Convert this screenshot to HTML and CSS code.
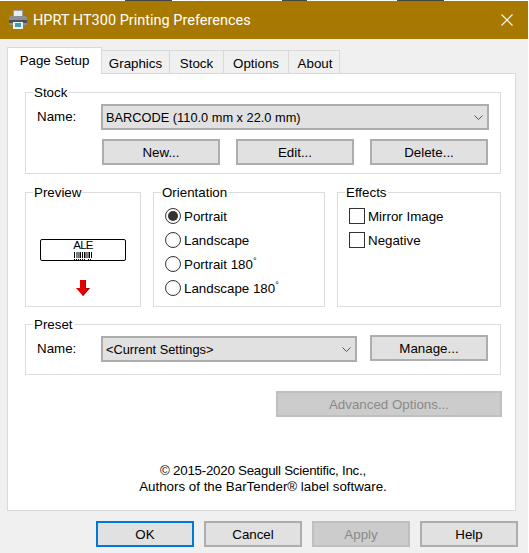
FILE: index.html
```html
<!DOCTYPE html>
<html lang="en">
<head>
    <meta charset="UTF-8">
    <title>HPRT HT300 Printing Preferences</title>
    <link rel="stylesheet" href="styles.css">
</head>
<body>
    <div class="window">
        <div class="titlebar">
            <svg class="title-icon" width="20" height="20" viewBox="0 0 20 20">
                <rect x="5.5" y="0.5" width="9" height="7" fill="#e8ecef" stroke="#9aa0a5"/>
                <path d="M1 8 Q1 6 3 6 H17 Q19 6 19 8 V15 H1 Z" fill="#8a9095"/>
                <rect x="1" y="10" width="18" height="3" fill="#4a5257"/>
                <rect x="5" y="12" width="10" height="7" fill="#eef1f3"/>
                <rect x="7" y="13" width="6" height="4" fill="#3c9fb5"/>
            </svg>
            <span class="title-text">HPRT HT300 Printing Preferences</span>
            <svg class="title-close" width="12" height="12" viewBox="0 0 12 12">
                <path d="M0.5 0.5 L11.5 11.5 M11.5 0.5 L0.5 11.5" stroke="#fff" stroke-width="1.1" fill="none"/>
            </svg>
        </div>

        <div class="content">
            <div class="tabs">
                <div class="tab tab-active">Page Setup</div>
                <div class="tab tab-graphics">Graphics</div>
                <div class="tab tab-stock">Stock</div>
                <div class="tab tab-options">Options</div>
                <div class="tab tab-about">About</div>
            </div>

            <div class="panel">
                <div class="group group-stock">
                    <div class="group-title">Stock</div>
                    <div class="field-row">
                        <span class="field-label">Name:</span>
                        <div class="select select-wide">
                            <span class="select-value">BARCODE (110.0 mm x 22.0 mm)</span>
                            <svg class="chevron" width="9" height="5" viewBox="0 0 9 5"><path d="M0.5 0.5 L4.5 4.5 L8.5 0.5" fill="none" stroke="#555" stroke-width="1"/></svg>
                        </div>
                    </div>
                    <div class="stock-buttons">
                        <div class="btn">New...</div>
                        <div class="btn">Edit...</div>
                        <div class="btn">Delete...</div>
                    </div>
                </div>

                <div class="group-row">
                    <div class="group group-preview">
                        <div class="group-title">Preview</div>
                        <div class="label-preview">
                            <div class="label-text">ALE</div>
                            <svg class="label-barcode" width="18" height="8" viewBox="0 0 18 8">
                                <path d="M0.5 0 V6 M3 0 V6 M5 0 V6 M6.5 0 V6 M8.5 0 V6 M10.5 0 V6 M12 0 V6 M14 0 V6 M15.5 0 V6 M17.5 0 V6" stroke="#000" stroke-width="1"/>
                                <path d="M0 7.5 H12 M14 7.5 H18" stroke="#000" stroke-width="1" stroke-dasharray="1 1"/>
                            </svg>
                        </div>
                        <svg class="feed-arrow" width="14" height="16" viewBox="0 0 14 16">
                            <path d="M4 0 H10 V8 H14 L7 16 L0 8 H4 Z" fill="#e30000"/>
                            <path d="M9 0 H10 V8 H14 L7 16 L6.5 15 L12 9 H9 Z" fill="#a80000"/>
                        </svg>
                    </div>

                    <div class="group group-orientation">
                        <div class="group-title">Orientation</div>
                        <div class="option"><span class="radio radio-on"></span>Portrait</div>
                        <div class="option"><span class="radio"></span>Landscape</div>
                        <div class="option"><span class="radio"></span>Portrait 180<span class="deg">°</span></div>
                        <div class="option"><span class="radio"></span>Landscape 180<span class="deg">°</span></div>
                    </div>

                    <div class="group group-effects">
                        <div class="group-title">Effects</div>
                        <div class="option"><span class="checkbox"></span>Mirror Image</div>
                        <div class="option"><span class="checkbox"></span>Negative</div>
                    </div>
                </div>

                <div class="group group-preset">
                    <div class="group-title">Preset</div>
                    <div class="field-row">
                        <span class="field-label">Name:</span>
                        <div class="select select-preset">
                            <span class="select-value">&lt;Current Settings&gt;</span>
                            <svg class="chevron" width="9" height="5" viewBox="0 0 9 5"><path d="M0.5 0.5 L4.5 4.5 L8.5 0.5" fill="none" stroke="#555" stroke-width="1"/></svg>
                        </div>
                        <div class="btn btn-manage">Manage...</div>
                    </div>
                </div>

                <div class="btn btn-advanced">Advanced Options...</div>

                <div class="copyright">
                    <div class="copyright-first">© 2015-2020 Seagull Scientific, Inc.,</div>
                    <div>Authors of the BarTender® label software.</div>
                </div>
            </div>

            <div class="footer">
                <div class="btn btn-footer btn-default">OK</div>
                <div class="btn btn-footer">Cancel</div>
                <div class="btn btn-footer btn-disabled">Apply</div>
                <div class="btn btn-footer">Help</div>
            </div>
        </div>
    </div>
</body>
</html>
```

FILE: styles.css
```css
body {
    margin: 0;
    font-family: "Liberation Sans", Arial, sans-serif;
    font-size: 13.33px;
    color: #000;
    background: #fff;
}
.window {
    width: 528px;
    height: 553px;
    display: flex;
    flex-direction: column;
    overflow: hidden;
    /* bits of the desktop showing above the title bar */
    background: linear-gradient(to right, #fff 125px, #444 125px, #444 172px, #fff 172px, #fff 282px, #444 282px, #444 307px, #fff 307px, #fff 397px, #444 397px, #444 444px, #fff 444px) top left / 100% 1px no-repeat;
}
.titlebar {
    height: 38px;
    margin-top: 1px;
    flex-shrink: 0;
    display: flex;
    align-items: center;
    background: #a87900;
    color: #fff;
    padding: 0 11px 0 8px;
}
.title-icon {
    margin-right: 5px;
}
.title-text {
    font-family: Roboto, "Liberation Sans", sans-serif;
    font-size: 14.5px;
    flex: 1;
}
.title-close {
    margin-right: 4px;
}
.content {
    flex: 1;
    background: #f0f0f0;
    padding: 8px 12px 0 7px;
    display: flex;
    flex-direction: column;
}

/* tabs */
.tabs {
    display: flex;
    align-items: flex-end;
    height: 26px;
    position: relative;
}
.tab {
    height: 23px;
    box-sizing: border-box;
    border: 1px solid #d9d9d9;
    border-left: 0;
    border-bottom: 0;
    background: #f0f0f0;
    display: flex;
    align-items: center;
    justify-content: center;
    padding-top: 2px;
}
.tab-active {
    height: 27px;
    width: 95px;
    border-left: 1px solid #d9d9d9;
    background: #fff;
    padding-top: 0;
    padding-bottom: 2px;
    margin-bottom: -1px;
    position: relative;
    z-index: 1;
}
.tab-graphics { width: 68px; }
.tab-stock { width: 54px; }
.tab-options { width: 65px; }
.tab-about { width: 51px; padding-left: 2px; }

.panel {
    height: 438px;
    box-sizing: border-box;
    background: #fff;
    border: 1px solid #d9d9d9;
    padding: 18px 14px 0 17px;
    display: flex;
    flex-direction: column;
}

/* group boxes */
.group {
    box-sizing: border-box;
    border: 1px solid #dcdcdc;
}
.group-title {
    width: fit-content;
    height: 16px;
    line-height: 18px;
    margin: -9px 0 0 7px;
    padding: 0 1px;
    background: #fff;
}
.group-stock {
    height: 82px;
}
.group-row {
    display: flex;
    gap: 12px;
    margin-top: 18px;
    height: 115px;
}
.group-preview {
    width: 116px;
    display: flex;
    flex-direction: column;
    align-items: center;
}
.group-preview .group-title {
    align-self: flex-start;
}
.group-orientation {
    width: 172px;
}
.group-effects {
    width: 164px;
}
.group-preset {
    height: 51px;
    margin-top: 17px;
}

/* form rows */
.field-row {
    display: flex;
    align-items: center;
    margin: 4px 0 0 11px;
}
.field-label {
    width: 64px;
    padding-bottom: 2px;
}
.select {
    height: 26px;
    box-sizing: border-box;
    border: 2px solid #adadad;
    background: #e1e1e1;
    display: flex;
    align-items: center;
    justify-content: space-between;
    padding: 0 4px 0 3px;
}
.select-wide {
    width: 388px;
}
.select-preset {
    width: 256px;
}
.select-value {
    font-size: 12.8px;
}
.chevron {
    flex-shrink: 0;
}
.btn {
    width: 118px;
    height: 26px;
    box-sizing: border-box;
    border: 2px solid #adadad;
    background: #e1e1e1;
    display: flex;
    align-items: center;
    justify-content: center;
}
.stock-buttons {
    display: flex;
    gap: 16px;
    margin: 9px 0 0 76px;
}
.btn-manage {
    margin: -2px 0 0 13px;
}
.btn-advanced {
    width: 226px;
    align-self: flex-end;
    margin: 16px -1px 0 0;
    background: #cccccc;
    border-color: #bfbfbf;
    color: #8a8a8a;
}

/* preview */
.label-preview {
    width: 86px;
    height: 22px;
    box-sizing: border-box;
    margin-top: 39px;
    border: 1px solid #000;
    border-radius: 2px;
    display: flex;
    flex-direction: column;
    align-items: center;
}
.label-text {
    font-size: 11.5px;
    letter-spacing: -0.7px;
    line-height: 11px;
}
.label-barcode {
    display: block;
    margin-top: 1px;
}
.feed-arrow {
    display: block;
    margin-top: 19px;
}

/* radios and checks */
.option {
    height: 24px;
    display: flex;
    align-items: center;
}
.group-orientation .option,
.group-effects .option {
    margin-left: 11px;
}
.group-orientation .option:nth-child(2),
.group-effects .option:nth-child(2) {
    margin-top: 4px;
}
.radio {
    width: 16px;
    height: 16px;
    box-sizing: border-box;
    border: 1px solid #333;
    border-radius: 50%;
    margin-right: 3px;
    flex-shrink: 0;
    display: flex;
    align-items: center;
    justify-content: center;
}
.radio-on::after {
    content: "";
    width: 10px;
    height: 10px;
    border-radius: 50%;
    background: #333;
}
.checkbox {
    width: 16px;
    height: 16px;
    box-sizing: border-box;
    border: 1px solid #333;
    margin-right: 3px;
    flex-shrink: 0;
}
.deg {
    font-size: 9px;
    align-self: flex-start;
    margin-top: 4px;
}

/* bottom */
.copyright {
    margin: 46px 0 0 0;
    text-align: center;
    line-height: 16px;
}
.copyright-first {
    letter-spacing: -0.25px;
}
.footer {
    display: flex;
    justify-content: flex-end;
    gap: 10px;
    margin: 10px -2px 0 0;
}
.btn-footer {
    width: 98px;
}
.btn-default {
    border-color: #0078d7;
}
.btn-disabled {
    background: #cccccc;
    border-color: #bfbfbf;
    color: #8a8a8a;
}
```
